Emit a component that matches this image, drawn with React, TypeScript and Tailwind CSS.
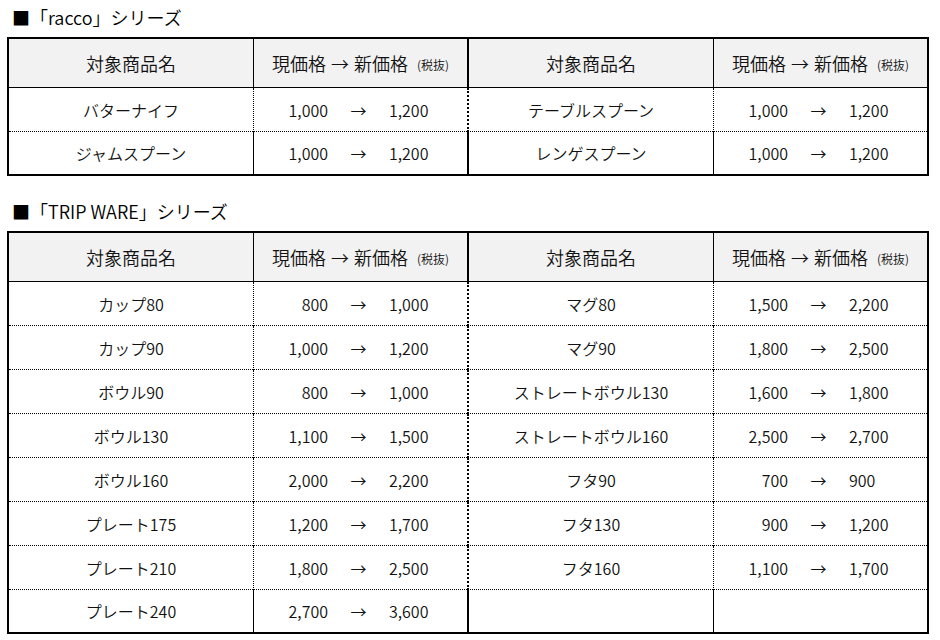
import React from 'react';

type Item = { name: string; from: string; to: string } | null;

const racco: [Item, Item][] = [
  [{ name: 'バターナイフ', from: '1,000', to: '1,200' }, { name: 'テーブルスプーン', from: '1,000', to: '1,200' }],
  [{ name: 'ジャムスプーン', from: '1,000', to: '1,200' }, { name: 'レンゲスプーン', from: '1,000', to: '1,200' }],
];

const trip: [Item, Item][] = [
  [{ name: 'カップ80', from: '800', to: '1,000' }, { name: 'マグ80', from: '1,500', to: '2,200' }],
  [{ name: 'カップ90', from: '1,000', to: '1,200' }, { name: 'マグ90', from: '1,800', to: '2,500' }],
  [{ name: 'ボウル90', from: '800', to: '1,000' }, { name: 'ストレートボウル130', from: '1,600', to: '1,800' }],
  [{ name: 'ボウル130', from: '1,100', to: '1,500' }, { name: 'ストレートボウル160', from: '2,500', to: '2,700' }],
  [{ name: 'ボウル160', from: '2,000', to: '2,200' }, { name: 'フタ90', from: '700', to: '900' }],
  [{ name: 'プレート175', from: '1,200', to: '1,700' }, { name: 'フタ130', from: '900', to: '1,200' }],
  [{ name: 'プレート210', from: '1,800', to: '2,500' }, { name: 'フタ160', from: '1,100', to: '1,700' }],
  [{ name: 'プレート240', from: '2,700', to: '3,600' }, null],
];

const Price = ({ item }: { item: Item }) =>
  item ? (
    <div className="flex items-center pl-[14px]">
      <span className="w-[60px] text-right">{item.from}</span>
      <span className="w-[61px] text-center">→</span>
      <span className="text-left">{item.to}</span>
    </div>
  ) : null;

const HeaderCells = ({ first }: { first: boolean }) => (
  <>
    <div className={`flex items-center justify-center ${first ? '' : 'border-l-2 border-black'}`}>
      対象商品名
    </div>
    <div className="flex items-center justify-center border-l border-black">
      <span>現価格</span>
      <span className="mx-[5px]">→</span>
      <span>新価格</span>
      <span className="ml-[9px] translate-y-[2px] text-[12px]">(税抜)</span>
    </div>
  </>
);

const PriceTable = ({ rows }: { rows: [Item, Item][] }) => (
  <div className="w-[922px] border-2 border-black text-[16px] text-[#111]">
    <div className="grid h-[49px] grid-cols-[244px_214px_246px_214px] border-b border-black bg-[#f2f2f2] text-[18px]">
      <HeaderCells first />
      <HeaderCells first={false} />
    </div>
    {rows.map((pair, i) => {
      const last = i === rows.length - 1;
      const rowCls = last ? 'h-[42px]' : 'h-[44px] border-b border-dotted border-black';
      return (
        <div key={i} className="grid grid-cols-[244px_214px_246px_214px]">
          <div className={`flex items-center justify-center ${rowCls}`}>{pair[0]?.name}</div>
          <div className={`flex items-center border-l border-black ${rowCls}`}>
            <Price item={pair[0]} />
          </div>
          <div className={`flex items-center justify-center border-l-2 border-black ${rowCls}`}>
            {pair[1]?.name}
          </div>
          <div className={`flex items-center border-l border-black ${rowCls}`}>
            <Price item={pair[1]} />
          </div>
        </div>
      );
    })}
  </div>
);

export default function App() {
  return (
    <div
      className="min-h-screen bg-white pl-[7px] pt-[5px] font-[350] text-black"
      style={{ fontFamily: '"Noto Sans CJK JP", "Noto Sans", sans-serif' }}
    >
      <div className="mb-[8px] h-[24px] pl-[5px] text-[18px] leading-[24px]">■「racco」シリーズ</div>
      <PriceTable rows={racco} />
      <div className="mb-[8px] mt-[23px] h-[24px] pl-[5px] text-[18px] leading-[24px]">■「TRIP WARE」シリーズ</div>
      <PriceTable rows={trip} />
    </div>
  );
}
